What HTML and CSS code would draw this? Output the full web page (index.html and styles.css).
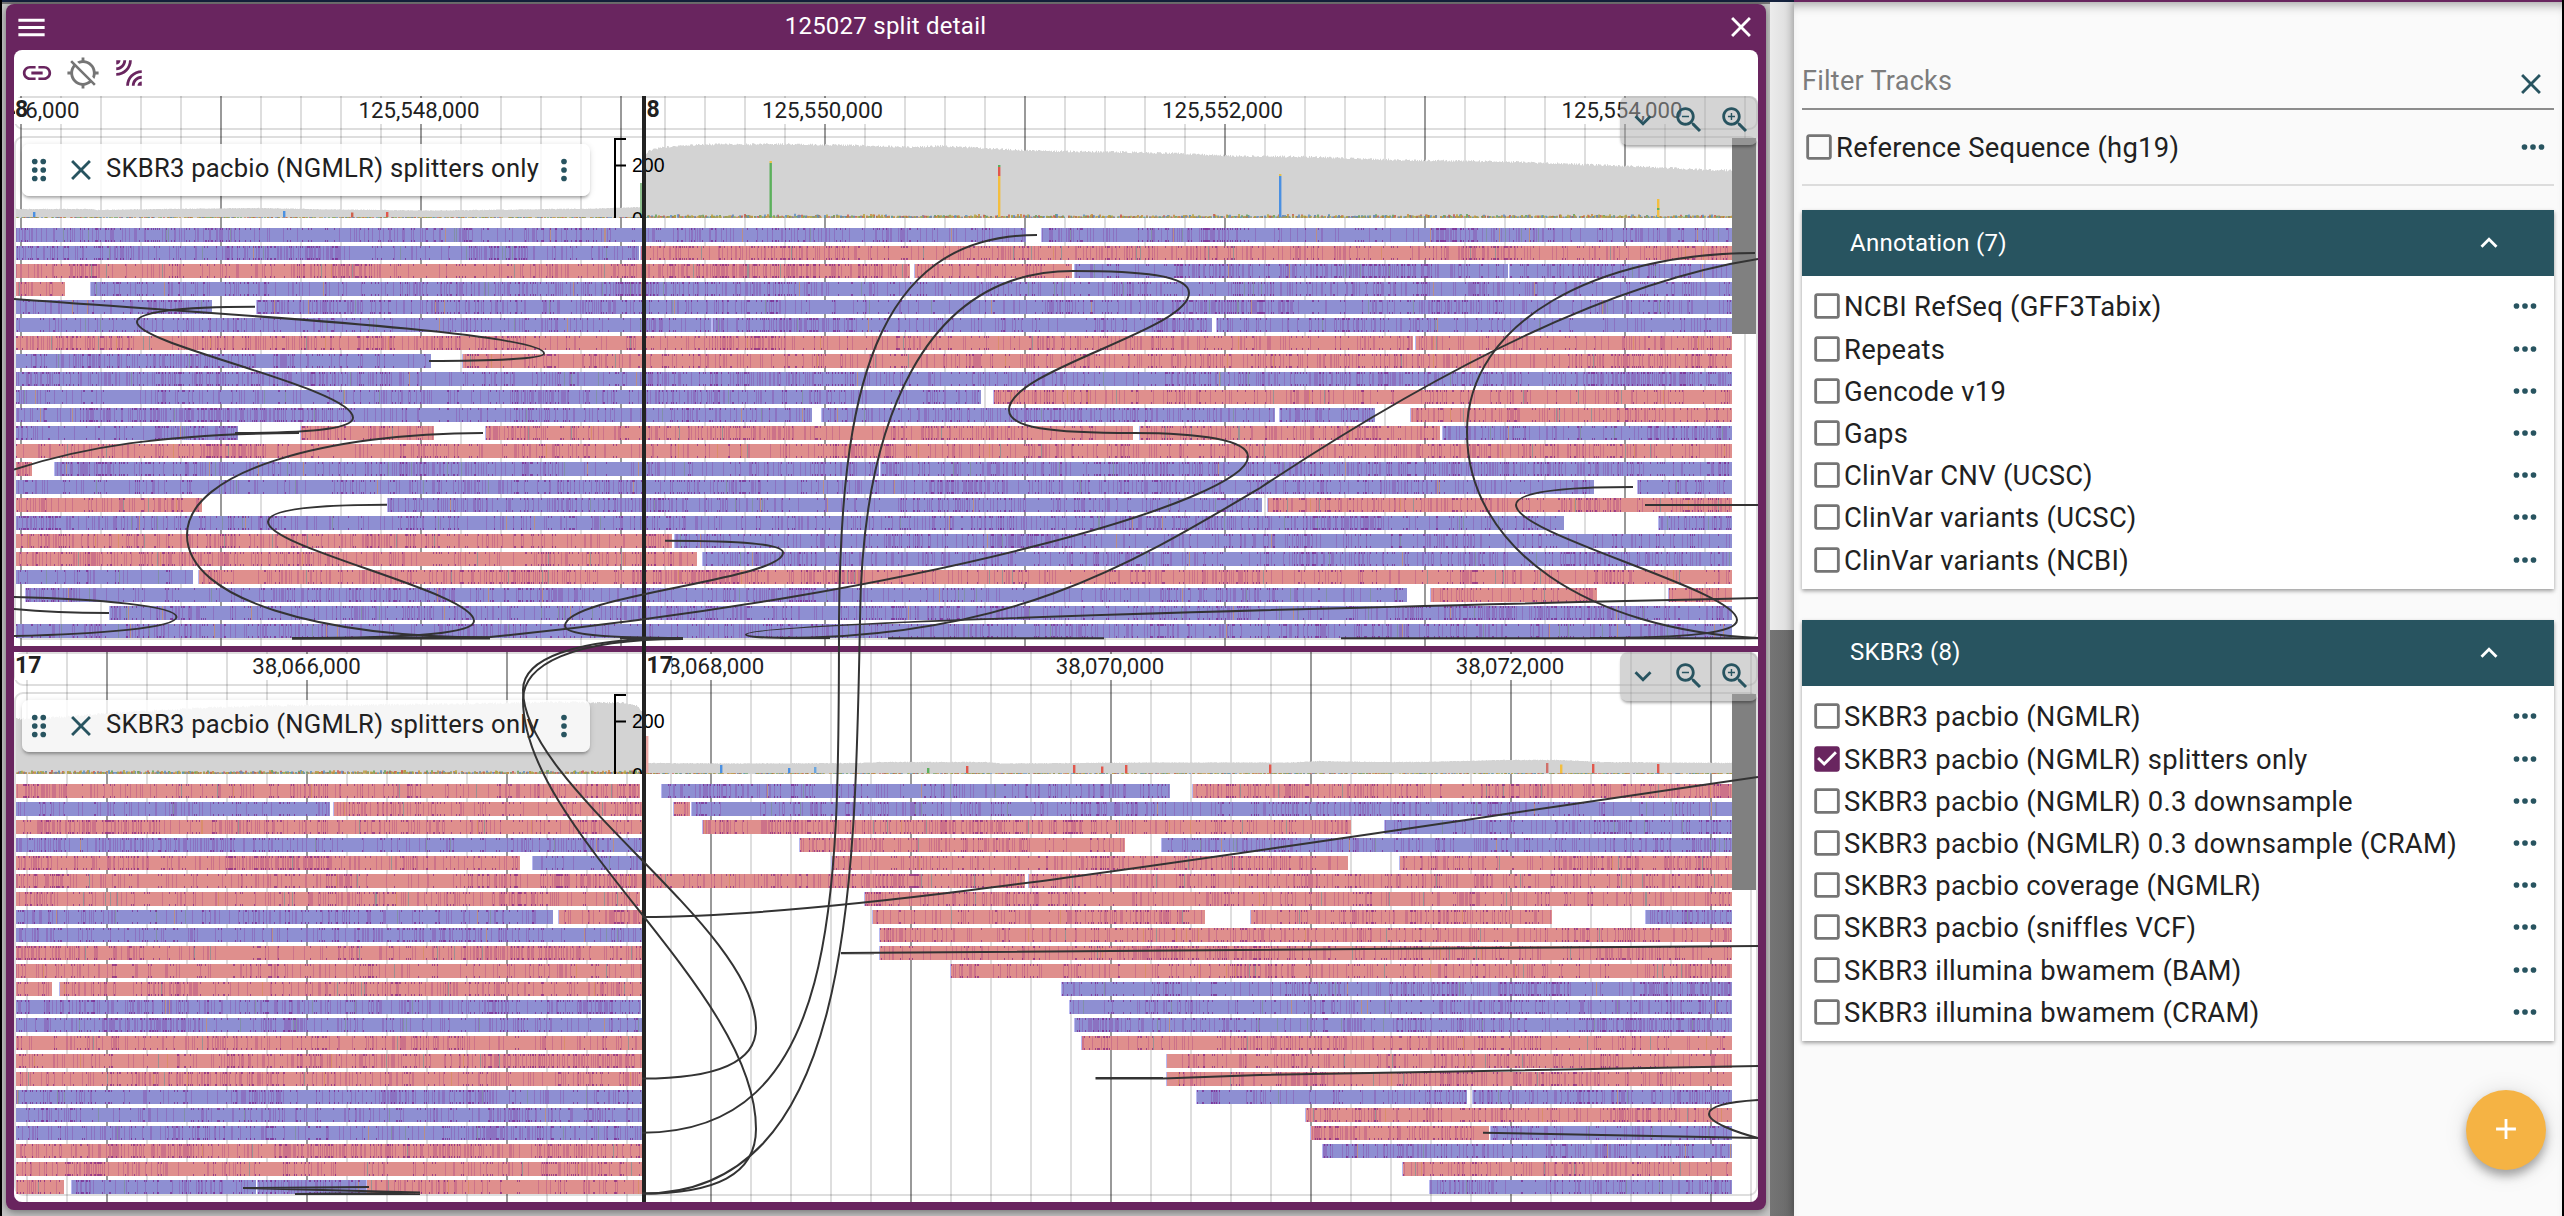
FILE: index.html
```html
<!DOCTYPE html>
<html lang="en">
<head>
<meta charset="utf-8">
<title>125027 split detail</title>
<link rel="stylesheet" href="styles.css">
</head>
<body>
<svg class="sprite" aria-hidden="true">
  <symbol id="i-menu" viewBox="0 0 24 24"><path d="M3 18h18v-2H3v2zm0-5h18v-2H3v2zm0-7v2h18V6H3z"/></symbol>
  <symbol id="i-close" viewBox="0 0 24 24"><path d="M19 6.41 17.59 5 12 10.59 6.41 5 5 6.41 10.59 12 5 17.59 6.41 19 12 13.41 17.59 19 19 17.59 13.41 12z"/></symbol>
  <symbol id="i-link" viewBox="0 0 24 24"><path d="M3.9 12c0-1.71 1.39-3.1 3.1-3.1h4V7H7c-2.76 0-5 2.24-5 5s2.24 5 5 5h4v-1.9H7c-1.71 0-3.1-1.39-3.1-3.1zM8 13h8v-2H8v2zm9-6h-4v1.9h4c1.71 0 3.1 1.39 3.1 3.1s-1.39 3.1-3.1 3.1h-4V17h4c2.76 0 5-2.24 5-5s-2.24-5-5-5z"/></symbol>
  <symbol id="i-locoff" viewBox="0 0 24 24"><path d="M20.94 11c-.46-4.17-3.77-7.48-7.94-7.94V1h-2v2.06c-1.13.12-2.19.46-3.16.97l1.5 1.5C10.16 5.19 11.06 5 12 5c3.87 0 7 3.13 7 7 0 .94-.19 1.84-.52 2.65l1.5 1.5c.5-.96.84-2.02.97-3.15H23v-2h-2.06zM3 4.27l2.04 2.04C3.97 7.62 3.25 9.23 3.06 11H1v2h2.06c.46 4.17 3.77 7.48 7.94 7.94V23h2v-2.06c1.77-.2 3.38-.91 4.69-1.98L19.73 21 21 19.73 4.27 3 3 4.27zm13.27 13.27C15.09 18.45 13.61 19 12 19c-3.87 0-7-3.13-7-7 0-1.61.55-3.09 1.46-4.27l9.81 9.81z"/></symbol>
  <symbol id="i-leak" viewBox="0 0 24 24"><path d="M6 3H3v3c1.66 0 3-1.34 3-3zm8 0h-2c0 4.97-4.03 9-9 9v2c6.08 0 11-4.93 11-11zm-4 0H8c0 2.76-2.24 5-5 5v2c3.87 0 7-3.13 7-7zm0 18h2c0-4.97 4.03-9 9-9v-2c-6.07 0-11 4.93-11 11zm8 0h3v-3c-1.66 0-3 1.34-3 3zm-4 0h2c0-2.76 2.24-5 5-5v-2c-3.87 0-7 3.13-7 7z"/></symbol>
  <symbol id="i-down" viewBox="0 0 24 24"><path d="M16.59 8.59 12 13.17 7.41 8.59 6 10l6 6 6-6z"/></symbol>
  <symbol id="i-up" viewBox="0 0 24 24"><path d="m12 8-6 6 1.41 1.41L12 10.83l4.59 4.58L18 14z"/></symbol>
  <symbol id="i-zoomout" viewBox="0 0 24 24"><path d="M15.5 14h-.79l-.28-.27C15.41 12.59 16 11.11 16 9.5 16 5.91 13.09 3 9.5 3S3 5.91 3 9.5 5.91 16 9.5 16c1.61 0 3.09-.59 4.23-1.57l.27.28v.79l5 4.99L20.49 19l-4.99-5zm-6 0C7.01 14 5 11.99 5 9.5S7.01 5 9.5 5 14 7.01 14 9.5 11.99 14 9.5 14zM7 9h5v1H7z"/></symbol>
  <symbol id="i-zoomin" viewBox="0 0 24 24"><path d="M15.5 14h-.79l-.28-.27C15.41 12.59 16 11.11 16 9.5 16 5.91 13.09 3 9.5 3S3 5.91 3 9.5 5.91 16 9.5 16c1.61 0 3.09-.59 4.23-1.57l.27.28v.79l5 4.99L20.49 19l-4.99-5zm-6 0C7.01 14 5 11.99 5 9.5S7.01 5 9.5 5 14 7.01 14 9.5 11.99 14 9.5 14zM12 10h-2v2H9v-2H7V9h2V7h1v2h2v1z"/></symbol>
  <symbol id="i-drag" viewBox="0 0 24 24"><circle cx="9" cy="6" r="2"/><circle cx="15" cy="6" r="2"/><circle cx="9" cy="12" r="2"/><circle cx="15" cy="12" r="2"/><circle cx="9" cy="18" r="2"/><circle cx="15" cy="18" r="2"/></symbol>
  <symbol id="i-morev" viewBox="0 0 24 24"><circle cx="12" cy="6" r="2"/><circle cx="12" cy="12" r="2"/><circle cx="12" cy="18" r="2"/></symbol>
  <symbol id="i-moreh" viewBox="0 0 24 24"><circle cx="6" cy="12" r="2"/><circle cx="12" cy="12" r="2"/><circle cx="18" cy="12" r="2"/></symbol>
  <symbol id="i-box" viewBox="0 0 24 24"><path d="M19 5v14H5V5h14m0-2H5c-1.1 0-2 .9-2 2v14c0 1.1.9 2 2 2h14c1.1 0 2-.9 2-2V5c0-1.1-.9-2-2-2z"/></symbol>
  <symbol id="i-boxon" viewBox="0 0 24 24"><path d="M19 3H5c-1.11 0-2 .9-2 2v14c0 1.1.89 2 2 2h14c1.11 0 2-.9 2-2V5c0-1.1-.89-2-2-2zm-9 14-5-5 1.41-1.41L10 14.17l7.59-7.59L19 8l-9 9z"/></symbol>
  <symbol id="i-add" viewBox="0 0 24 24"><path d="M19 13h-6v6h-2v-6H5v-2h6V5h2v6h6v2z"/></symbol>
</svg>

<div class="app">
  <main class="workspace">
    <section class="window">
      <header class="titlebar">
        <svg class="icon menu"><use href="#i-menu"/></svg>
        <h1 class="title">125027 split detail</h1>
        <svg class="icon"><use href="#i-close"/></svg>
      </header>
      <div class="content">
        <div class="tools">
          <svg class="icon on"><use href="#i-link"/></svg>
          <svg class="icon off"><use href="#i-locoff"/></svg>
          <svg class="icon on"><use href="#i-leak"/></svg>
        </div>
        <div class="views">
          <div class="view">
            <svg class="plot" id="view-0" viewBox="14 96 1744 550"></svg>
            <div class="track-label">
              <svg class="icon"><use href="#i-drag"/></svg>
              <svg class="icon shut"><use href="#i-close"/></svg>
              <span class="track-name">SKBR3 pacbio (NGMLR) splitters only</span>
              <svg class="icon"><use href="#i-morev"/></svg>
            </div>
            <div class="scroll-thumb"></div>
            <div class="zoomer">
              <svg class="icon"><use href="#i-down"/></svg>
              <svg class="icon"><use href="#i-zoomout"/></svg>
              <svg class="icon"><use href="#i-zoomin"/></svg>
            </div>
          </div>
          <div class="view">
            <svg class="plot" id="view-1" viewBox="14 96 1744 550"></svg>
            <div class="track-label">
              <svg class="icon"><use href="#i-drag"/></svg>
              <svg class="icon shut"><use href="#i-close"/></svg>
              <span class="track-name">SKBR3 pacbio (NGMLR) splitters only</span>
              <svg class="icon"><use href="#i-morev"/></svg>
            </div>
            <div class="scroll-thumb"></div>
            <div class="zoomer">
              <svg class="icon"><use href="#i-down"/></svg>
              <svg class="icon"><use href="#i-zoomout"/></svg>
              <svg class="icon"><use href="#i-zoomin"/></svg>
            </div>
          </div>
          <svg class="links" viewBox="14 96 1744 1106">
            <path class="region-edge" d="M644 96V1202"/>
            <path d="M14 299C200 313 544 332 544 353.5C544 359 490 361 429 361"/>
            <path d="M255 306.7C180 306.7 137 312 137 322C137 345 353 388 353 417.7C353 430 300 433 235 433"/>
            <path d="M14 469.5C80 448 160 433.5 299 433"/>
            <path d="M483 433C330 433 187 470 187 535C187 600 320 637 490 637.5"/>
            <path d="M387 504.7C310 504.7 268 510 268 521.7C268 548 474 592 474 621C474 633 420 638 292 638"/>
            <path d="M14 597C100 599 176 606 176.5 617C176 628 100 634 14 636"/>
            <path d="M14 609C50 612.5 80 613 109 613"/>
            <path d="M665 540.7C740 540.7 783 544 783 552.5C783 580 565 595 565 626C565 634 600 638 683 638"/>
            <path d="M1134 433C1050 433 1009 428 1009 410C1009 370 1189 330 1189 293C1189 275 1140 271 1073 271C925 271 862 420 860 620C855 900 850 1193.6 642 1193.6"/>
            <path d="M1134 433C1200 433 1248 440 1248 456.7C1248 500 920 595 490 637L292 638.5"/>
            <path d="M1037 235C870 235 841 400 839 620C839 900 840 1132.7 642 1132.7"/>
            <path d="M1755 253C1600 253 1467 320 1467 432C1467 550 1590 630 1758 638"/>
            <path d="M1758 259C1590 285 1400 395 1260 488C1130 565 1010 638 780 638"/>
            <path d="M1758 598C1400 606 746 622 746 634.5C746 638 775 638 830 638"/>
            <path d="M1633 487C1560 487 1516 492 1516 505C1516 535 1737 590 1737 620C1737 633 1690 638 1590 638"/>
            <path d="M888 638.3H1104M1341 638.3H1758M1645 505H1758M292 638.5H490M620 638H683"/>
            <path d="M683 638C570 638 523 660 523 690C523 787 756 927 756 1028C756 1065 710 1078.6 642 1078.6"/>
            <path d="M683 639C570 639 523 665 523 700C523 830 756 990 756 1129C756 1175 715 1193.6 642 1193.6"/>
            <path d="M642 917C850 917 1200 858 1758 777"/>
            <path d="M841 953.3H874M841 953L1758 946"/>
            <path d="M1095.5 1078H1163M1095.5 1078.6H1163L1260 1075L1758 1066"/>
            <path d="M1758 1100C1725 1102 1709 1107 1709 1114C1709 1122 1735 1132 1758 1138M1483 1132.7L1758 1138"/>
            <path d="M369 1187L243 1188L420 1192.6L295 1194H420"/>
          </svg>
        </div>
      </div>
    </section>
    <div class="page-scroll"><div class="page-thumb"></div></div>
  </main>

  <aside class="drawer">
    <div class="filter">
      <span class="placeholder">Filter Tracks</span>
      <svg class="icon"><use href="#i-close"/></svg>
    </div>
    <div class="row ref"><svg class="icon box"><use href="#i-box"/></svg><span class="name">Reference Sequence (hg19)</span><svg class="icon more"><use href="#i-moreh"/></svg></div>
    <section class="group">
      <header class="group-head"><span>Annotation (7)</span><svg class="icon"><use href="#i-up"/></svg></header>
      <div class="rows">
        <div class="row"><svg class="icon box"><use href="#i-box"/></svg><span class="name">NCBI RefSeq (GFF3Tabix)</span><svg class="icon more"><use href="#i-moreh"/></svg></div>
        <div class="row"><svg class="icon box"><use href="#i-box"/></svg><span class="name">Repeats</span><svg class="icon more"><use href="#i-moreh"/></svg></div>
        <div class="row"><svg class="icon box"><use href="#i-box"/></svg><span class="name">Gencode v19</span><svg class="icon more"><use href="#i-moreh"/></svg></div>
        <div class="row"><svg class="icon box"><use href="#i-box"/></svg><span class="name">Gaps</span><svg class="icon more"><use href="#i-moreh"/></svg></div>
        <div class="row"><svg class="icon box"><use href="#i-box"/></svg><span class="name">ClinVar CNV (UCSC)</span><svg class="icon more"><use href="#i-moreh"/></svg></div>
        <div class="row"><svg class="icon box"><use href="#i-box"/></svg><span class="name">ClinVar variants (UCSC)</span><svg class="icon more"><use href="#i-moreh"/></svg></div>
        <div class="row"><svg class="icon box"><use href="#i-box"/></svg><span class="name">ClinVar variants (NCBI)</span><svg class="icon more"><use href="#i-moreh"/></svg></div>
      </div>
    </section>
    <section class="group">
      <header class="group-head"><span>SKBR3 (8)</span><svg class="icon"><use href="#i-up"/></svg></header>
      <div class="rows">
        <div class="row"><svg class="icon box"><use href="#i-box"/></svg><span class="name">SKBR3 pacbio (NGMLR)</span><svg class="icon more"><use href="#i-moreh"/></svg></div>
        <div class="row"><svg class="icon box checked"><use href="#i-boxon"/></svg><span class="name">SKBR3 pacbio (NGMLR) splitters only</span><svg class="icon more"><use href="#i-moreh"/></svg></div>
        <div class="row"><svg class="icon box"><use href="#i-box"/></svg><span class="name">SKBR3 pacbio (NGMLR) 0.3 downsample</span><svg class="icon more"><use href="#i-moreh"/></svg></div>
        <div class="row"><svg class="icon box"><use href="#i-box"/></svg><span class="name">SKBR3 pacbio (NGMLR) 0.3 downsample (CRAM)</span><svg class="icon more"><use href="#i-moreh"/></svg></div>
        <div class="row"><svg class="icon box"><use href="#i-box"/></svg><span class="name">SKBR3 pacbio coverage (NGMLR)</span><svg class="icon more"><use href="#i-moreh"/></svg></div>
        <div class="row"><svg class="icon box"><use href="#i-box"/></svg><span class="name">SKBR3 pacbio (sniffles VCF)</span><svg class="icon more"><use href="#i-moreh"/></svg></div>
        <div class="row"><svg class="icon box"><use href="#i-box"/></svg><span class="name">SKBR3 illumina bwamem (BAM)</span><svg class="icon more"><use href="#i-moreh"/></svg></div>
        <div class="row"><svg class="icon box"><use href="#i-box"/></svg><span class="name">SKBR3 illumina bwamem (CRAM)</span><svg class="icon more"><use href="#i-moreh"/></svg></div>
      </div>
    </section>
    <button class="fab"><svg class="icon"><use href="#i-add"/></svg></button>
  </aside>
</div>
<script src="plot.js"></script>
</body>
</html>
```
FILE: styles.css
```css
* { box-sizing: border-box; }
body {
  margin: 0;
  font-family: Roboto, "Liberation Sans", sans-serif;
  color: #212121;
  background: #000;
  overflow: hidden;
}
.sprite { position: absolute; width: 0; height: 0; }
.icon { width: 34px; height: 34px; fill: currentColor; flex: none; display: block; }

.app { display: flex; width: 2564px; height: 1216px; padding: 0 2px; }

.workspace {
  width: 1792px;
  display: flex;
  justify-content: space-between;
  padding: 2px 0 0 4px;
  background: #c6c6c6;
  border-top: 2px solid #14213d;
  box-shadow: inset 0 2px 0 #777;
}
.window {
  width: 1760px;
  height: 1206px;
  background: #69255f;
  border-radius: 8px;
  padding: 0 8px 8px;
  box-shadow: 0 2px 8px rgba(0, 0, 0, .45);
}
.titlebar { height: 46px; display: flex; align-items: center; color: #fff; }
.titlebar .menu { width: 35px; height: 35px; }
.title {
  flex: 1;
  margin: -2px 0 0 -2px;
  text-align: center;
  font-size: 24px;
  font-weight: 400;
  letter-spacing: .01em;
}
.content { height: 1152px; background: #fff; border-radius: 8px; overflow: hidden; }
.tools { height: 46px; display: flex; align-items: center; gap: 12px; padding-left: 6px; }
.tools .on { color: #69255f; }
.tools .off { color: #757575; }

.views { position: relative; display: flex; flex-direction: column; gap: 6px; background: #69255f; }
.view { position: relative; height: 550px; background: #fff; }
.plot { display: block; width: 1744px; height: 550px; }

.grid-minor { stroke: #000; stroke-opacity: .13; stroke-width: 2; }
.grid-major { stroke: #999; stroke-width: 2; }
.frame { fill: none; stroke: #000; stroke-opacity: .13; stroke-width: 2; }
.mask { fill: #fff; }
.coord { font-size: 22.2px; fill: #212121; text-anchor: middle; }
.refname { font-size: 23px; font-weight: 700; fill: #212121; }
.axis { fill: none; stroke: #000; stroke-width: 2; }
.axis-text { font-family: "Liberation Sans", sans-serif; font-size: 19.5px; fill: #000; }
.cover { fill: #d3d3d3; }
.fwd { fill: #df8f8d; }
.rev { fill: #8e8fd2; }
.end { fill: #b9b9f2; }
.m-thin { fill: #80007f; fill-opacity: .2; }
.m-cap { fill: #760f82; fill-opacity: .58; }
.m-grey { fill: #7c9096; fill-opacity: .7; }
.m-orange { fill: #d58d55; fill-opacity: .6; }

.track-label {
  position: absolute;
  left: 8px;
  top: 48px;
  width: 568px;
  height: 52px;
  display: flex;
  align-items: center;
  color: #285460;
  background: rgba(255, 255, 255, .8);
  border-radius: 7px;
  box-shadow: 0 3px 3px -1px rgba(0, 0, 0, .28), 0 1px 6px rgba(0, 0, 0, .12);
}
.track-label .shut { margin-left: 8px; }
.track-name { margin: -5px 0 0 8px; width: 441px; white-space: nowrap; font-size: 25.6px; letter-spacing: .01em; color: #212121; }

.scroll-thumb { position: absolute; left: 1718px; top: 42px; width: 24px; height: 196px; background: #808080; }
.zoomer {
  position: absolute;
  right: 0;
  top: 0;
  width: 138px;
  height: 49px;
  display: flex;
  align-items: center;
  justify-content: space-between;
  padding: 0 6px 2px 6px;
  color: #285460;
  background: rgba(169, 169, 169, .5);
  border-radius: 8px;
  box-shadow: 0 3px 3px -1px rgba(0, 0, 0, .35);
}
.links { position: absolute; left: 0; top: 0; width: 1744px; height: 1106px; fill: none; stroke: #333; stroke-width: 2; }
.links .region-edge { stroke: #222; stroke-width: 4; }

.page-scroll {
  width: 24px;
  height: 1214px;
  margin-top: -2px;
  padding-top: 628px;
  background: linear-gradient(90deg, #ececec, #dadada);
}
.page-thumb { height: 586px; background: linear-gradient(90deg, #757575, #696969); }

.drawer {
  position: relative;
  width: 768px;
  background: #fafafa;
  border-top: 2px solid #69255f;
  padding: 0 8px;
  box-shadow: -1px 0 8px rgba(0, 0, 0, .3), inset 0 10px 12px -8px rgba(0, 0, 0, .4);
}
.filter {
  height: 108px;
  display: flex;
  align-items: flex-end;
  justify-content: space-between;
  border-bottom: 2px solid #8c8c8c;
  padding-bottom: 7px;
  color: #285460;
}
.filter .icon { margin-right: 6px; }
.placeholder { color: #7c7c7c; font-size: 27px; line-height: 34px; letter-spacing: .01em; padding-bottom: 3px; }

.row { display: flex; align-items: center; height: 42.2px; padding: 0 12px 0 8px; }
.row .box { color: #757575; }
.row .checked { color: #69255f; }
.row .more { color: #285460; margin-left: auto; }
.name { font-size: 27.4px; line-height: 34px; letter-spacing: .01em; white-space: nowrap; padding-top: 2px; }
.row.ref { height: 76px; padding: 0 4px 0 0; border-bottom: 2px solid #dcdcdc; margin-bottom: 24px; }

.group { background: #fff; box-shadow: 0 2px 4px rgba(0, 0, 0, .38); margin-bottom: 31.2px; }
.group-head {
  height: 66px;
  display: flex;
  align-items: center;
  justify-content: space-between;
  padding: 0 48px;
  background: #285460;
  color: #fff;
  font-size: 24px;
  letter-spacing: .01em;
}
.group-head span { margin-top: -1px; }
.rows { padding: 9.4px 0 8px; }

.fab {
  position: absolute;
  right: 16px;
  bottom: 46px;
  width: 80px;
  height: 80px;
  display: flex;
  align-items: center;
  justify-content: center;
  padding: 0 0 2px;
  border: 0;
  border-radius: 50%;
  background: #f5b344;
  color: #fff;
  box-shadow: 0 6px 10px rgba(0, 0, 0, .3), 0 2px 24px rgba(0, 0, 0, .12);
}
```
FILE: plot.js
```js
// Seeded generator, so that the mismatch marks are stable between loads.
let seed = 20210;
function rnd() {
  seed = (seed * 1664525 + 1013904223) % 4294967296;
  return seed / 4294967296;
}

const RIGHT = 1732;

// Read rows: strand, start, end; "f" is the forward strand, "r" the reverse one.
const VIEWS = [
  {
    minor: [21, 665], majorLeft: 21, majorRight: 825,
    names: [[16, '8', 11], [647.5, '8', 13]],
    labels: [[19, '125,546,000'], [419, '125,548,000'], [822.5, '125,550,000'], [1222.5, '125,552,000'], [1622, '125,554,000']],
    cover: [[16, 209], [90, 209], [97, 210], [160, 209], [260, 208], [330, 209.5], [430, 210.5], [520, 209.5], [600, 208.5], [642, 207], [643, 155], [650, 150], [665, 147], [700, 144.5], [790, 144], [860, 145.5], [910, 147], [940, 146], [1000, 149], [1040, 151], [1120, 152], [1180, 153.5], [1230, 156], [1300, 156.5], [1400, 160], [1500, 161.5], [1560, 163.5], [1640, 166.5], [1700, 169.5], [1732, 170.5]],
    bars: [[640, 183, 218, '#8fbf8f'], [769.5, 161, 163, '#e8c04a'], [769.5, 163, 217, '#5cb05c'], [998, 165, 167, '#5cb05c'], [998, 167, 176, '#e2574c'], [998, 176, 217, '#f3be3f'], [1279, 174, 176, '#e8c04a'], [1279, 176, 217, '#4a90e2'], [1657, 199, 217, '#f3be3f'], [1657, 208, 210, '#5cb05c'], [33, 212, 217, '#4a90e2'], [283, 211, 217, '#4a90e2'], [351, 212.5, 217, '#d0604c'], [386, 212, 217, '#e2574c']],
    noisy: x => x > 646,
    rows: [
      'r16-1026 r1042-1732', 'r16-639 f641-1732', 'f16-910 f915-1072 r1075-1508 r1510-1732', 'f16-65 r91-1732', 'r16-212 r257-1732',
      'r16-711 r712.5-1212 r1217-1732', 'f16-1413 f1416-1732', 'r16-431 f463-1732', 'r16-1732', 'r16-981 f994-1732',
      'r16-812 r822-1275 r1280-1375 f1411-1732', 'r16-238 f301-434 f486-1133 f1140-1440 r1443-1732', 'f16-1732', 'f16-32 r55-879 r881-1732',
      'r16-1594 r1638-1732', 'f16-202 r388-1262 f1268-1732', 'r16-1564 r1659-1732', 'f16-672 r675-1732', 'f16-697 r703-1732',
      'r16-193 f199-1732', 'r26-1407 f1431-1597 f1669-1732', 'r110-1732', 'r16-1732'
    ]
  },
  {
    minor: [27, 671], majorLeft: 107, majorRight: 711,
    names: [[16, '17', 25], [647.5, '17', 25]],
    labels: [[306.5, '38,066,000'], [710, '38,068,000'], [1110, '38,070,000'], [1510, '38,072,000']],
    cover: [[16, 163], [60, 161], [110, 157], [200, 152], [270, 149.5], [360, 149], [480, 147.5], [560, 146], [625, 147], [636, 150], [641, 155], [642, 207], [740, 207.5], [860, 207], [880, 206], [985, 206], [1000, 207.5], [1150, 206.5], [1290, 206.5], [1320, 205], [1370, 206], [1420, 206], [1500, 204], [1560, 204], [1600, 206], [1660, 206.5], [1732, 207]],
    bars: [[646, 180, 217, '#eea9a5'], [720, 209, 217, '#4a90e2'], [788, 212, 217, '#4a90e2'], [814, 211, 217, '#6aa6e0'], [927, 212, 217, '#5cb05c'], [966, 210, 217, '#e2574c'], [1073, 209, 217, '#e2574c'], [1101, 210.5, 217, '#e2574c'], [1125, 209, 217, '#e2574c'], [1269, 208.5, 217, '#e2574c'], [1546, 207, 217, '#d0706a'], [1560, 208.5, 217, '#f3be3f'], [1592, 208, 217, '#e2574c'], [1657, 208, 217, '#e2574c']],
    noisy: x => x < 642,
    rows: [
      'f16-640 r662-1170 f1193-1732', 'r16-330 f334-642 f674-690 r692-1732', 'f16-642 f703-1351 r1385-1732', 'r16-642 f800-1125 r1162-1732',
      'f16-520 r533-642 f832-1348 f1400-1732', 'f16-1025 f1029-1732', 'f16-640 f865-1732', 'r16-553 f559-642 f873-1205 f1251-1552 r1646-1732',
      'r16-642 f880-1732', 'f16-642 f880-1732', 'f16-642 f951-1732', 'f16-52 f60-642 r1062-1732', 'r16-641 r1070-1732', 'r16-642 r1075-1732',
      'f16-642 f1082-1732', 'f16-642 f1167-1732', 'f16-642 f1167-1732', 'r16-642 r1197-1467 r1473-1732', 'r16-642 f1306-1732',
      'r16-642 f1311-1489 r1491-1732', 'f16-642 r1323-1732', 'f16-642 f1403-1732', 'f16-64 r72-256 r258-367 f367-642 r1430-1732'
    ]
  }
];

function rect(x, y, w, h) {
  return `M${x} ${y}h${w}v${h}h${-w}z`;
}

function grid(v) {
  let minor = '', major = '';
  const line = (x, isMajor) => {
    if (isMajor) major += `M${x} 96V646`;
    else minor += `M${x} 96V646`;
  };
  for (let x = v.minor[0]; x < 642; x += 40) line(x, (x - v.majorLeft) % 200 === 0);
  for (let x = v.minor[1]; x < 1758; x += 40) line(x, (x - v.majorRight) % 200 === 0);
  return `<path class="grid-minor" d="${minor}"/><path class="grid-major" d="${major}"/>`;
}

function ruler(v) {
  let out = '<rect class="frame" x="15" y="97" width="1742" height="32" rx="8"/><rect class="frame" x="15" y="137" width="1742" height="502" rx="8"/>';
  v.labels.forEach(([x, t]) => {
    const w = t.length > 10 ? 122 : 110;
    out += `<rect class="mask" x="${x - w / 2}" y="98" width="${w}" height="26"/><text class="coord" x="${x}" y="117.8">${t}</text>`;
  });
  v.names.forEach(([x, t, w]) => {
    out += `<rect class="mask" x="${x - 1}" y="98" width="${w}" height="26"/><text class="refname" x="${x - 1}" y="116.5">${t}</text>`;
  });
  return out;
}

function coverage(v) {
  let d = 'M16 218', i = 0;
  for (let x = 16; x < RIGHT; x++) {
    while (v.cover[i + 1][0] < x) i++;
    const [x0, y0] = v.cover[i], [x1, y1] = v.cover[i + 1];
    const base = y0 + (y1 - y0) * (x - x0) / (x1 - x0);
    const y = base + (rnd() - 0.5) * (base < 190 ? 2 : 0.6);
    d += `L${x} ${y.toFixed(1)}h1`;
  }
  let out = `<path class="cover" d="${d}V218z"/>`;
  const tints = ['#c98a3a', '#5f9f56', '#c9584c', '#5a8fc4', '#b7a53f'];
  tints.forEach((c, n) => {
    let p = '';
    for (let x = 16 + n; x < RIGHT; x += 1 + Math.floor(rnd() * 7)) {
      const tall = v.noisy(x);
      const h = tall ? 1 + rnd() * rnd() * 3 : 0.8;
      if (tall || rnd() < 0.6) p += rect(x, +(217.8 - h).toFixed(1), 2, +h.toFixed(1));
    }
    out += `<path fill="${c}" fill-opacity=".8" d="${p}"/>`;
  });
  v.bars.forEach(([x, y0, y1, c]) => { out += `<path fill="${c}" d="${rect(x, y0, 2.4, y1 - y0)}"/>`; });
  return out;
}

function pileup(v) {
  const p = { f: '', r: '', end: '', thin: '', cap: '', grey: '', orange: '' };
  v.rows.forEach((row, k) => {
    const y = 228 + 18 * k;
    row.split(' ').forEach(part => {
      const strand = part[0];
      const [a, b] = part.slice(1).split('-').map(Number);
      p[strand] += rect(a, y, b - a, 14);
      if (a > 16) p.end += rect(a - 1.5, y, 1.5, 14);
      let density = 0.3 + rnd() * 0.15;
      for (let x = Math.ceil(a); x < b - 1; x++) {
        if (rnd() < 0.03) density = 0.15 + rnd() * rnd() * 0.7;
        const r = rnd();
        if (r < density * 0.7) p.thin += rect(x, y, 1, 14);
        if (rnd() < density * 0.48) p.cap += rect(x, y, 1, 2) + rect(x, y + 12, 1, 2);
        if (r > 0.992) p.grey += rect(x, y, 1, 14);
        else if (r > 0.988) p.orange += rect(x, y, 1, 14);
      }
    });
  });
  return `<g shape-rendering="crispEdges"><path class="fwd" d="${p.f}"/><path class="rev" d="${p.r}"/><path class="end" d="${p.end}"/>` +
    `<path class="m-thin" d="${p.thin}"/><path class="m-grey" d="${p.grey}"/><path class="m-orange" d="${p.orange}"/><path class="m-cap" d="${p.cap}"/></g>`;
}

function axis() {
  return `<path class="axis" d="M626 139H615V218M615 165.5H626"/>` +
    `<svg x="614" y="138" width="60" height="80" viewBox="614 138 60 80"><text class="axis-text" x="632" y="172.3">200</text><text class="axis-text" x="632" y="226">0</text></svg>`;
}

VIEWS.forEach((v, n) => {
  document.getElementById('view-' + n).innerHTML = grid(v) + ruler(v) + coverage(v) + pileup(v) + axis();
});
```
